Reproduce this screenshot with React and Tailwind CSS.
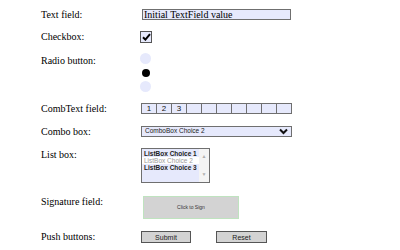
import React from "react";

function Row({ label, className = "", labelClass = "", children }) {
  return (
    <div className={`flex ${className}`}>
      <div
        className={`w-[101px] shrink-0 whitespace-nowrap pl-[41px] font-['Liberation_Serif','Times_New_Roman',serif] text-[10px] leading-[12px] text-black ${labelClass}`}
      >
        {label}
      </div>
      {children}
    </div>
  );
}

function Chevron() {
  return (
    <svg width="9" height="7" viewBox="0 0 9 7">
      <path d="M1 1.5 L4.5 5 L8 1.5" fill="none" stroke="#111" strokeWidth="2" />
    </svg>
  );
}

export default function App() {
  const comb = ["1", "2", "3", "", "", "", "", "", "", ""];
  return (
    <div className="relative h-[250px] w-[400px] overflow-hidden bg-white pt-[9px] font-['Liberation_Sans',Arial,sans-serif]">
      <Row label="Text field:" className="h-[11px] items-center">
        <div className="ml-[41px] h-[11px] w-[149px] whitespace-nowrap border border-[#6f6f6f] bg-[#e6e9fc] pl-[1px] font-['Liberation_Serif','Times_New_Roman',serif] text-[10px] leading-[9px] text-black">
          Initial TextField value
        </div>
      </Row>

      <Row label="Checkbox:" className="mt-[11px] h-[12px] items-center">
        <div className="ml-[39px] flex h-[12px] w-[12px] items-center justify-center border border-[#555] bg-[#e6e9fc]">
          <svg width="9" height="8" viewBox="0 0 9 8">
            <path d="M1 4.2 L3.4 6.6 L8 1.2" fill="none" stroke="#000" strokeWidth="2" />
          </svg>
        </div>
      </Row>

      <Row label="Radio button:" className="mt-[10px] h-[40px] items-start" labelClass="pt-[2px]">
        <div className="ml-[39px] flex flex-col items-center gap-[3px]">
          <div className="h-[11px] w-[11px] rounded-full bg-[#e6e9fc]" />
          <div className="flex h-[11px] w-[11px] items-center justify-center">
            <div className="h-[8px] w-[8px] rounded-full bg-black" />
          </div>
          <div className="h-[11px] w-[11px] rounded-full bg-[#e6e9fc]" />
        </div>
      </Row>

      <Row label="CombText field:" className="mt-[10px] h-[11px] items-center">
        <div className="ml-[40px] flex h-[11px] w-[151px] border border-[#6f6f6f] bg-[#e6e9fc]">
          {comb.map((c, i) => (
            <div
              key={i}
              className={`flex flex-1 items-center justify-center text-[8px] leading-none text-[#111] ${i < 9 ? "border-r border-[#6f6f6f]" : ""}`}
            >
              {c}
            </div>
          ))}
        </div>
      </Row>

      <Row label="Combo box:" className="mt-[12px] h-[11px] items-center">
        <div className="ml-[40px] flex h-[11px] w-[151px] items-center justify-between border border-[#6f6f6f] bg-[#e6e9fc] pl-[3px] pr-[3px] text-[6.5px] leading-none text-[#222]">
          <span>ComboBox Choice 2</span>
          <Chevron />
        </div>
      </Row>

      <Row label="List box:" className="mt-[11px] h-[35px] items-start" labelClass="pt-[1px]">
        <div className="ml-[40px] flex h-[35px] w-[69px] border border-[#6f6f6f] bg-[#e6e9fc] text-[6.5px] leading-[7px]">
          <div className="flex flex-1 flex-col pt-[1px]">
            <div className="whitespace-nowrap pl-[2px] font-bold text-[#222]">ListBox Choice 1</div>
            <div className="whitespace-nowrap bg-white pl-[2px] text-[#9a9a9a]">ListBox Choice 2</div>
            <div className="whitespace-nowrap pl-[2px] font-bold text-[#222]">ListBox Choice 3</div>
          </div>
          <div className="flex w-[10px] flex-col items-center justify-between bg-[#f4f4f4] py-[5px] text-[5px] leading-none text-[#b0b0b0]">
            <span>▲</span>
            <span>▼</span>
          </div>
        </div>
      </Row>

      <Row label="Signature field:" className="mt-[13px] h-[23px] items-start">
        <div className="ml-[42px] flex h-[23px] w-[96px] items-center justify-center border border-[#bfe3bf] bg-[#d3d3d3] text-[5px] leading-none text-[#333]">
          Click to Sign
        </div>
      </Row>

      <Row label="Push buttons:" className="mt-[12px] h-[12px] items-center">
        <div className="ml-[40px] flex gap-[25px]">
          <div className="flex h-[12px] w-[50px] items-center justify-center border border-[#555] bg-[#d3d3d3] text-[7px] leading-none text-[#222]">
            Submit
          </div>
          <div className="flex h-[12px] w-[51px] items-center justify-center border border-[#555] bg-[#d3d3d3] text-[7px] leading-none text-[#222]">
            Reset
          </div>
        </div>
      </Row>
    </div>
  );
}
